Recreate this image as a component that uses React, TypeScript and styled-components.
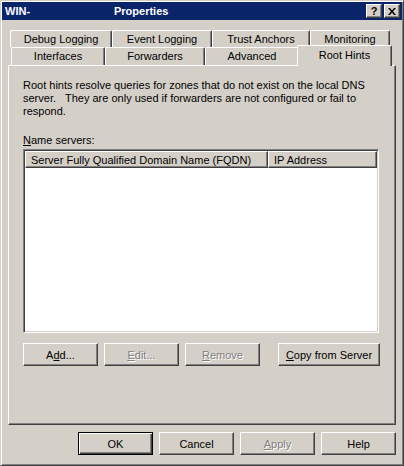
import React from 'react';
import styled, { createGlobalStyle, css } from 'styled-components';

const GlobalStyle = createGlobalStyle`
  html, body {
    margin: 0;
    padding: 0;
    background: #d4d0c8;
  }
  * {
    box-sizing: border-box;
  }
`;

const raised = css`
  border: 1px solid;
  border-color: #ffffff #404040 #404040 #ffffff;
  box-shadow: inset -1px -1px #808080;
`;

const Window = styled.div`
  width: 404px;
  height: 466px;
  display: flex;
  flex-direction: column;
  padding: 1px;
  border: 1px solid;
  border-color: #d4d0c8 #404040 #404040 #d4d0c8;
  box-shadow: inset 1px 1px #ffffff, inset -1px -1px #808080;
  background: #d4d0c8;
  font-family: 'Liberation Sans', Arial, sans-serif;
  font-size: 11px;
  color: #000;
`;

const TitleBar = styled.div`
  height: 18px;
  display: flex;
  align-items: center;
  padding: 0 2px 0 3px;
  background: #0a246a;
  color: #fff;
  font-weight: bold;
`;

const HostName = styled.span`
  width: 109px;
`;

const TitleText = styled.span`
  flex: 1;
`;

const TitleButton = styled.div`
  ${raised};
  width: 16px;
  height: 14px;
  margin-left: 2px;
  display: flex;
  align-items: center;
  justify-content: center;
  background: #d4d0c8;
  color: #000;
  font-size: 11px;
  font-weight: bold;
  line-height: 1;
`;

const Body = styled.div`
  flex: 1;
  display: flex;
  flex-direction: column;
  padding: 10px 6px 7px 6px;
`;

const TabRow = styled.div<{ $indent: number; $h: number }>`
  display: flex;
  height: ${({ $h }) => $h}px;
  padding-left: ${({ $indent }) => $indent}px;
`;

const Tab = styled.div<{ $w: number; $active?: boolean }>`
  width: ${({ $w }) => $w}px;
  flex: none;
  display: flex;
  align-items: center;
  justify-content: center;
  white-space: nowrap;
  background: #d4d0c8;
  border-top: 1px solid #ffffff;
  border-left: 1px solid #ffffff;
  border-right: 1px solid #404040;
  box-shadow: inset -1px 0 #808080;
  border-top-left-radius: 2px;
  border-top-right-radius: 2px;
  padding-bottom: 1px;
  ${({ $active, $w }) =>
    $active &&
    css`
      position: relative;
      z-index: 1;
      width: ${$w + 4}px;
      height: 21px;
      margin: -2px -2px -1px -2px;
      padding-bottom: 2px;
    `}
`;

const Panel = styled.div`
  height: 360px;
  display: flex;
  flex-direction: column;
  padding: 13px 0 0 14px;
  border: 1px solid;
  border-color: #ffffff #404040 #404040 #ffffff;
  box-shadow: inset -1px -1px #808080;
`;

const Description = styled.div`
  white-space: pre;
  line-height: 13px;
`;

const FieldLabel = styled.div`
  margin-top: 16px;
  line-height: 13px;
`;

const ListView = styled.div`
  width: 356px;
  height: 184px;
  margin-top: 2px;
  border: 1px solid;
  border-color: #808080 #ffffff #ffffff #808080;
  box-shadow: inset 1px 1px #404040, inset -1px -1px #d4d0c8;
  padding: 1px;
  background: #fff;
`;

const HeaderRow = styled.div`
  display: flex;
  height: 17px;
`;

const HeaderCell = styled.div<{ $w: number }>`
  ${raised};
  width: ${({ $w }) => $w}px;
  flex: none;
  display: flex;
  align-items: center;
  padding-left: 5px;
  background: #d4d0c8;
  white-space: nowrap;
`;

const ButtonRow = styled.div`
  display: flex;
  gap: 6px;
  margin-top: 10px;
  width: 357px;
`;

const Spacer = styled.div`
  flex: 1;
`;

const Button = styled.div<{ $w?: number; $disabled?: boolean; $default?: boolean }>`
  ${raised};
  width: ${({ $w }) => $w ?? 75}px;
  height: 23px;
  flex: none;
  display: flex;
  align-items: center;
  justify-content: center;
  background: #d4d0c8;
  white-space: nowrap;
  ${({ $disabled }) =>
    $disabled &&
    css`
      color: #808080;
      text-shadow: 1px 1px #ffffff;
    `}
  ${({ $default }) =>
    $default &&
    css`
      border-color: #000;
      box-shadow: inset 1px 1px #ffffff, inset -1px -1px #404040, inset -2px -2px #808080;
    `}
`;

const DialogButtons = styled.div`
  display: flex;
  justify-content: flex-end;
  gap: 6px;
  margin-top: 7px;
`;

const row1 = [
  { label: 'Debug Logging', w: 102 },
  { label: 'Event Logging', w: 100 },
  { label: 'Trust Anchors', w: 98 },
  { label: 'Monitoring', w: 80 },
];

const row2 = [
  { label: 'Interfaces', w: 94 },
  { label: 'Forwarders', w: 100 },
  { label: 'Advanced', w: 94 },
  { label: 'Root Hints', w: 91, active: true },
];

const CloseGlyph = () => (
  <svg width="8" height="7" viewBox="0 0 8 7">
    <path d="M0 0h2l2 2.5L6 0h2L5 3.5 8 7H6L4 4.5 2 7H0l3-3.5z" fill="#000" />
  </svg>
);

const App: React.FC = () => {
  return (
    <>
      <GlobalStyle />
      <Window>
        <TitleBar>
          <HostName>WIN-</HostName>
          <TitleText>Properties</TitleText>
          <TitleButton>?</TitleButton>
          <TitleButton>
            <CloseGlyph />
          </TitleButton>
        </TitleBar>
        <Body>
          <TabRow $indent={2} $h={17}>
            {row1.map((t) => (
              <Tab key={t.label} $w={t.w}>
                {t.label}
              </Tab>
            ))}
          </TabRow>
          <TabRow $indent={3} $h={18}>
            {row2.map((t) => (
              <Tab key={t.label} $w={t.w} $active={t.active}>
                {t.label}
              </Tab>
            ))}
          </TabRow>
          <Panel>
            <Description>
              {'Root hints resolve queries for zones that do not exist on the local DNS\nserver.   They are only used if forwarders are not configured or fail to\nrespond.'}
            </Description>
            <FieldLabel>
              <u>N</u>ame servers:
            </FieldLabel>
            <ListView>
              <HeaderRow>
                <HeaderCell $w={243}>Server Fully Qualified Domain Name (FQDN)</HeaderCell>
                <HeaderCell $w={109}>IP Address</HeaderCell>
              </HeaderRow>
            </ListView>
            <ButtonRow>
              <Button>
                A<u>d</u>d...
              </Button>
              <Button $disabled>
                <u>E</u>dit...
              </Button>
              <Button $disabled>
                <u>R</u>emove
              </Button>
              <Spacer />
              <Button $w={102}>
                <u>C</u>opy from Server
              </Button>
            </ButtonRow>
          </Panel>
          <DialogButtons>
            <Button $default>OK</Button>
            <Button>Cancel</Button>
            <Button $disabled>
              <u>A</u>pply
            </Button>
            <Button>Help</Button>
          </DialogButtons>
        </Body>
      </Window>
    </>
  );
};

export default App;
